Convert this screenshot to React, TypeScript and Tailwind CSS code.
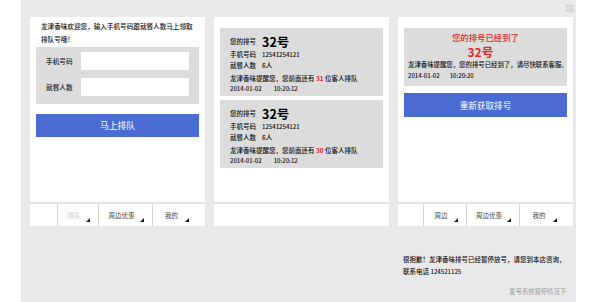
import React from "react";

const Tri = () => (
  <svg width="4" height="4" viewBox="0 0 4 4" className="block">
    <polygon points="4,0 4,4 0,4" fill="#1a1a1a" />
  </svg>
);

type Cell = { w: string; label?: string; light?: boolean; last?: boolean };

const TabBar = ({ cells }: { cells: Cell[] }) => (
  <div className="h-[24px] flex bg-white border-t-2 border-[#e2e2e4]">
    {cells.map((c, i) => (
      <div
        key={i}
        className={`relative h-full ${c.w} ${i > 0 ? "border-l border-[#d4d4d6]" : ""}`}
      >
        {c.label && (
          <>
            <div
              className={`h-full pt-[6px] text-center leading-[10px] text-[6.5px] ${
                c.last ? "pr-[15px]" : "pr-[8px]"
              } ${c.light ? "text-[#c8c8c8]" : "text-[#444]"}`}
            >
              {c.label}
            </div>
            <div className={`absolute bottom-[4px] ${c.last ? "right-[16px]" : "right-[8px]"}`}>
              <Tri />
            </div>
          </>
        )}
      </div>
    ))}
  </div>
);

const QueueCard = ({ n }: { n: string }) => (
  <div className="mx-[6px] h-[68px] bg-[#dcdcdc] pt-[7px] pl-[10px] text-[#111] text-[6.5px] font-medium">
    <div className="h-[14px] flex items-center">
      <span className="w-[32px]">您的排号</span>
      <span className="text-[12.5px] leading-[14px] font-semibold text-black">32号</span>
    </div>
    <div className="flex leading-[11px]">
      <span className="w-[32px]">手机号码</span>
      <span className="text-[6px]">12541254121</span>
    </div>
    <div className="flex leading-[11px]">
      <span className="w-[32px]">就餐人数</span>
      <span>6人</span>
    </div>
    <div className="mt-[1px] leading-[12px]">
      龙津香味提醒您，您前面还有 <span className="text-[#e02b2b] font-bold">{n}</span> 位客人排队
    </div>
    <div className="leading-[10px] text-[6px] flex gap-[12px]">
      <span>2014-01-02</span>
      <span>10:20:12</span>
    </div>
  </div>
);

export default function App() {
  return (
    <div className="w-[600px] h-[302px] bg-white overflow-hidden font-['Noto_Sans_CJK_SC',sans-serif]">
      <div className="relative ml-[21px] w-[555px] h-[302px] bg-[#e9e9eb] pt-[17px] pl-[9px] flex flex-col">
        <div className="absolute right-[3px] top-[5px]">
          <svg width="7" height="7" viewBox="0 0 7 7">
            <rect x="0.5" y="0.5" width="6" height="6" fill="none" stroke="#c9c9c9" strokeWidth="1" />
            <path d="M1.5 1.5 L5.5 5.5 M5.5 1.5 L1.5 5.5" stroke="#c9c9c9" strokeWidth="1" />
          </svg>
        </div>

        <div className="flex gap-[9px]">
          {/* Panel 1 */}
          <div className="w-[175px] h-[209px] flex flex-col bg-white">
            <div className="flex-1 flex flex-col">
              <div className="pt-[3px] px-[11px] leading-[13px] text-[6.6px] text-[#111] font-medium">
                龙津香味欢迎您，输入手机号码跟就餐人数马上领取
                <br />
                排队号哦！
              </div>
              <div className="mt-[1px] mx-[6px] h-[57px] bg-[#dcdcdc] pt-[5px] pl-[10px] pr-[10px] flex flex-col gap-[8px]">
                <div className="flex items-center h-[18px]">
                  <span className="w-[35px] text-[6.7px] text-[#222] font-medium">手机号码</span>
                  <div className="flex-1 h-[18px] bg-white" />
                </div>
                <div className="flex items-center h-[18px]">
                  <span className="w-[35px] text-[6.7px] text-[#222] font-medium">就餐人数</span>
                  <div className="flex-1 h-[18px] bg-white" />
                </div>
              </div>
              <div className="mt-[10px] mx-[6px] h-[23px] bg-[#4a6cd2] flex items-center justify-center text-white text-[8.8px]">
                马上排队
              </div>
            </div>
            <TabBar
              cells={[
                { w: "w-[27px]" },
                { w: "w-[41px]", label: "排队", light: true },
                { w: "w-[54px]", label: "周边优惠" },
                { w: "flex-1", label: "我的", last: true },
              ]}
            />
          </div>

          {/* Panel 2 */}
          <div className="w-[175px] h-[209px] flex flex-col bg-white">
            <div className="flex-1 pt-[11px] flex flex-col gap-[4px]">
              <QueueCard n="31" />
              <QueueCard n="30" />
            </div>
            <div className="h-[24px] bg-white border-t-2 border-[#e2e2e4]" />
          </div>

          {/* Panel 3 */}
          <div className="w-[175px] h-[209px] flex flex-col bg-white">
            <div className="flex-1 pt-[11px]">
              <div className="mx-[6px] h-[58px] bg-[#dcdcdc] pt-[3px] px-[4px]">
                <div className="text-center text-[#e02b2b] text-[8.4px] leading-[12px] font-medium">您的排号已经到了</div>
                <div className="mt-[1px] text-center pr-[10px] text-[#e02b2b] text-[12px] leading-[15px] font-bold">32号</div>
                <div className="text-[6.4px] leading-[11px] text-[#111] font-medium whitespace-nowrap">
                  龙津香味提醒您，您的排号已经到了，请尽快联系客服。
                </div>
                <div className="text-[6px] leading-[11px] text-[#111] font-medium flex gap-[10px]">
                  <span>2014-01-02</span>
                  <span>10:20:20</span>
                </div>
              </div>
              <div className="mt-[7px] mx-[6px] h-[24px] bg-[#4a6cd2] flex items-center justify-center text-white text-[8.6px]">
                重新获取排号
              </div>
            </div>
            <TabBar
              cells={[
                { w: "w-[25px]" },
                { w: "w-[43px]", label: "周边" },
                { w: "w-[53px]", label: "周边优惠" },
                { w: "flex-1", label: "我的", last: true },
              ]}
            />
          </div>
        </div>

        <div className="ml-[373px] w-[165px] mt-[27px] text-[6.5px] leading-[12px] text-[#111] font-medium">
          <div className="whitespace-nowrap">很抱歉！龙津香味排号已经暂停放号，请您到本店咨询，</div>
          <div>
            联系电话 <span className="text-[6px]">124521125</span>
          </div>
          <div className="mt-[9px] pr-[2px] text-right leading-[10px] text-[6.3px] text-[#999] font-normal">发号系统暂停情况下</div>
        </div>
      </div>
    </div>
  );
}
